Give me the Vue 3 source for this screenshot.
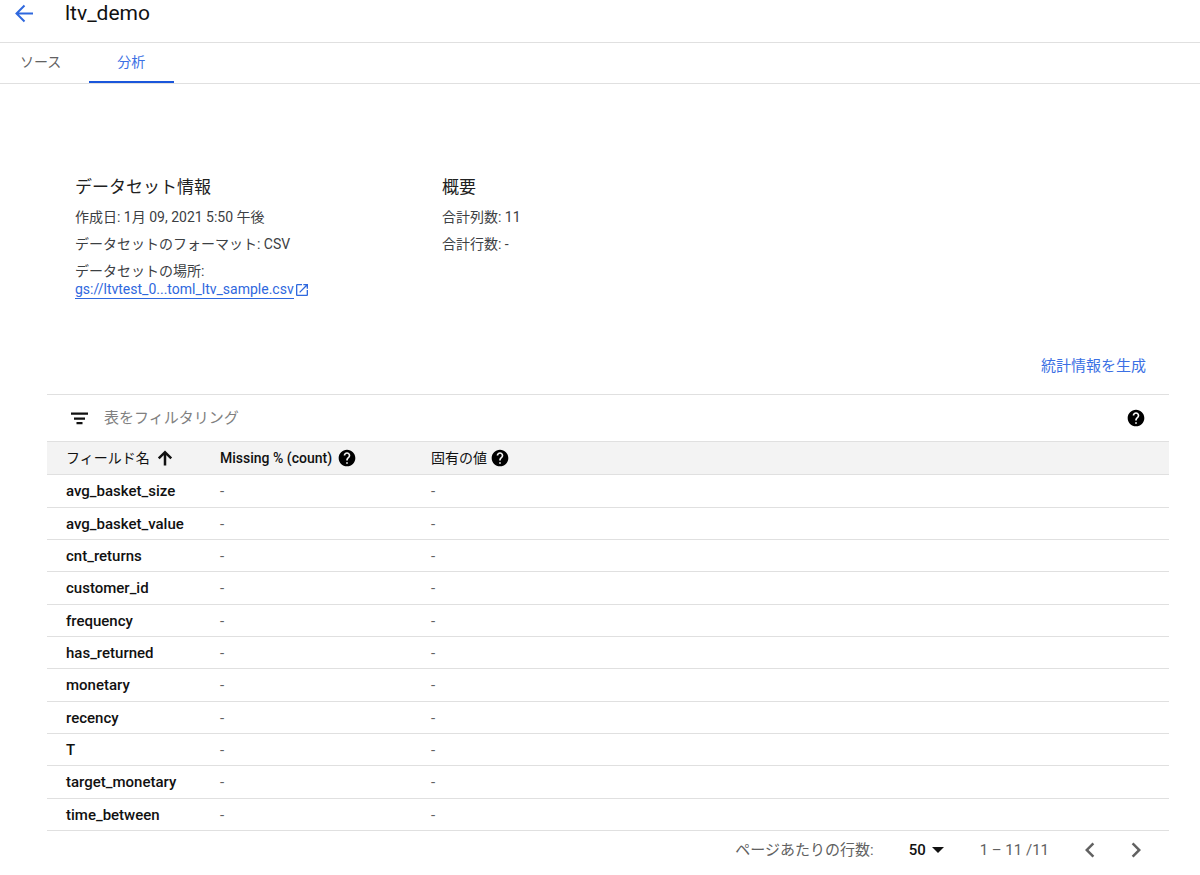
<script setup>
import { ref } from 'vue'

const helpPath =
  'M12 2C6.48 2 2 6.48 2 12s4.48 10 10 10 10-4.48 10-10S17.52 2 12 2zm1 17h-2v-2h2v2zm2.07-7.75l-.9.92C13.45 12.9 13 13.5 13 15h-2v-.5c0-1.1.45-2.1 1.17-2.83l1.24-1.26c.37-.36.59-.86.59-1.41 0-1.1-.9-2-2-2s-2 .9-2 2H8c0-2.21 1.79-4 4-4s4 1.79 4 4c0 .88-.36 1.68-.93 2.25z'

const filterText = ref('')
const pageSize = ref('50')
const fields = [
  'avg_basket_size',
  'avg_basket_value',
  'cnt_returns',
  'customer_id',
  'frequency',
  'has_returned',
  'monetary',
  'recency',
  'T',
  'target_monetary',
  'time_between'
]
</script>

<template>
  <div class="page">
    <header class="header">
      <button class="icon-btn" type="button" aria-label="戻る">
        <svg class="back" viewBox="0 0 24 24"><path d="M12.500 4.500l-8 8 8 8M5 12.500H21" /></svg>
      </button>
      <h1>ltv_demo</h1>
    </header>

    <nav class="tabs">
      <a href="#source" class="tab">ソース</a>
      <a href="#analyze" class="tab active" aria-current="page">分析</a>
    </nav>

    <main class="content">
      <div class="info">
        <section>
          <h2>データセット情報</h2>
          <p>作成日: 1月 09, 2021 5:50 午後</p>
          <p>データセットのフォーマット: CSV</p>
          <p>データセットの場所:</p>
          <a href="#bucket" class="location">
            <span>gs://ltvtest_0...toml_ltv_sample.csv</span>
            <svg viewBox="0 0 24 24"><path d="M19 19H5V5h7V3H5c-1.1 0-2 .9-2 2v14c0 1.1.9 2 2 2h14c1.1 0 2-.9 2-2v-7h-2v7zM14 3v2h3.590l-9.830 9.830 1.410 1.410L19 6.410V10h2V3h-7z" /></svg>
          </a>
        </section>
        <section>
          <h2>概要</h2>
          <p>合計列数: 11</p>
          <p>合計行数: -</p>
        </section>
      </div>

      <div class="actions">
        <button class="generate" type="button">統計情報を生成</button>
      </div>

      <div class="filter">
        <svg class="filter-icon" viewBox="0 0 18 14"><path d="M1 1.500h17v2.200H1zM4 6.500h11v2.200H4zM6.500 11h6v2.200h-6z" /></svg>
        <input v-model="filterText" type="text" aria-label="表をフィルタリング" placeholder="表をフィルタリング" />
        <button class="icon-btn" type="button" aria-label="ヘルプ">
          <svg class="help" viewBox="0 0 24 24"><path :d="helpPath" /></svg>
        </button>
      </div>

      <table>
        <thead>
          <tr>
            <th class="col-name" scope="col" aria-sort="ascending">
              <span class="head">フィールド名
                <svg class="sort" viewBox="0 0 24 24"><path d="M4.500 12.500L12 5l7.500 7.500M12 5.500v15.500" /></svg>
              </span>
            </th>
            <th class="col-missing" scope="col">
              <span class="head wide">Missing % (count)
                <svg class="help" viewBox="0 0 24 24"><path :d="helpPath" /></svg>
              </span>
            </th>
            <th scope="col">
              <span class="head narrow">固有の値
                <svg class="help" viewBox="0 0 24 24"><path :d="helpPath" /></svg>
              </span>
            </th>
          </tr>
        </thead>
        <tbody>
          <tr v-for="name in fields" :key="name">
            <th scope="row">{{ name }}</th>
            <td>-</td>
            <td>-</td>
          </tr>
        </tbody>
      </table>

      <footer class="pager">
        <label for="page-size">ページあたりの行数:</label>
        <span class="select">
          <select id="page-size" v-model="pageSize">
            <option>10</option>
            <option>25</option>
            <option>50</option>
          </select>
          <svg viewBox="0 0 12 6"><path d="M0 0h12L6 6z" /></svg>
        </span>
        <span class="range">1 – 11 /11</span>
        <span class="steps">
          <button class="icon-btn" type="button" aria-label="前のページ">
            <svg class="chevron" viewBox="0 0 24 24"><path d="M15.410 7.410L14 6l-6 6 6 6 1.410-1.410L10.830 12z" /></svg>
          </button>
          <button class="icon-btn" type="button" aria-label="次のページ">
            <svg class="chevron" viewBox="0 0 24 24"><path d="M10 6L8.590 7.410 13.170 12l-4.580 4.590L10 18l6-6z" /></svg>
          </button>
        </span>
      </footer>
    </main>
  </div>
</template>

<style>
body {
  margin: 0;
  background: #fff;
}
</style>

<style scoped>
.page {
  font-family: Roboto, "Noto Sans CJK JP", sans-serif;
  font-size: 14px;
  line-height: 18px;
  color: #3c4043;
}
svg {
  display: block;
  flex: none;
  fill: currentColor;
}
button,
input,
select {
  font: inherit;
  color: inherit;
  border: 0;
  padding: 0;
  margin: 0;
  background: none;
}
h1,
h2,
p {
  margin: 0;
  font-weight: 400;
}
.header {
  display: flex;
  align-items: center;
  gap: 29px;
  padding: 0 12px 16px;
  border-bottom: 1px solid #e0e0e0;
}
h1 {
  font-size: 21px;
  line-height: 26px;
  color: #111;
}
.back,
.sort {
  fill: none;
  stroke: currentColor;
  stroke-width: 2;
}
.back {
  width: 24px;
  height: 24px;
  color: #2f68de;
}
.tabs {
  display: flex;
  border-bottom: 1px solid #e0e0e0;
}
.tab {
  padding: 10px 28px;
  border-bottom: 2px solid transparent;
  color: #616161;
  text-decoration: none;
}
.tab:first-child {
  padding-left: 20px;
}
.tab.active {
  padding-right: 29px;
  color: #3b70e4;
  border-color: #1a56db;
}
.content {
  padding: 91px 31px 0 47px;
}
.info {
  display: grid;
  grid-template-columns: 367px 1fr;
  padding-left: 28px;
}
h2 {
  font-size: 17px;
  line-height: 24px;
  color: #212121;
}
p {
  margin-top: 9px;
}
.location {
  display: inline-flex;
  align-items: center;
  color: #2f68de;
  text-decoration: none;
}
.location span {
  line-height: 17px;
  border-bottom: 1px solid #2f68de;
}
.location svg {
  width: 16px;
  height: 16px;
}
.actions {
  display: flex;
  justify-content: flex-end;
  padding: 58px 23px 19px;
}
.generate {
  font-size: 15px;
  color: #3b70e4;
}
.filter {
  display: flex;
  align-items: center;
  height: 46px;
  padding: 0 23px;
  border-top: 1px solid #e0e0e0;
}
.filter-icon {
  width: 18px;
  height: 14px;
  color: #111;
}
.filter input {
  flex: 1;
  min-width: 0;
  margin-left: 16px;
  font-size: 15px;
  line-height: 20px;
  outline: 0;
}
.filter input::placeholder {
  color: #808080;
  opacity: 1;
}
.help {
  width: 20px;
  height: 20px;
  color: #000;
}
table {
  width: 100%;
  border-collapse: separate;
  border-spacing: 0;
  table-layout: fixed;
}
.col-name {
  width: 154px;
}
.col-missing {
  width: 211px;
}
th,
td {
  box-sizing: border-box;
  height: 32px;
  padding: 0 0 0 19px;
  border-bottom: 1px solid #e0e0e0;
  text-align: left;
  font-size: 15px;
  font-weight: 500;
  color: #111;
}
td {
  font-weight: 400;
  color: #616161;
}
tbody tr:nth-child(3n + 1) > * {
  height: 33px;
}
thead th {
  height: 34px;
  background: #f3f3f3;
  border-top: 1px solid #e0e0e0;
}
.head {
  display: flex;
  align-items: center;
  gap: 5px;
  font-size: 14px;
}
.narrow {
  gap: 3px;
}
.narrow,
.col-name .head {
  font-weight: 400;
}
.sort {
  width: 20px;
  height: 20px;
  stroke-width: 3;
}
.pager {
  display: flex;
  align-items: center;
  justify-content: flex-end;
  height: 38px;
  padding-right: 18px;
  font-size: 15px;
  color: #616161;
}
.select {
  display: flex;
  align-items: center;
  gap: 5px;
  margin: 0 36px 0 35px;
  color: #111;
}
.select select {
  appearance: none;
  font-size: 15px;
  font-weight: 500;
}
.select svg {
  width: 12px;
  height: 6px;
}
.range {
  margin-right: 26px;
}
.steps {
  display: flex;
  gap: 16px;
}
.chevron {
  width: 30px;
  height: 30px;
}
</style>
